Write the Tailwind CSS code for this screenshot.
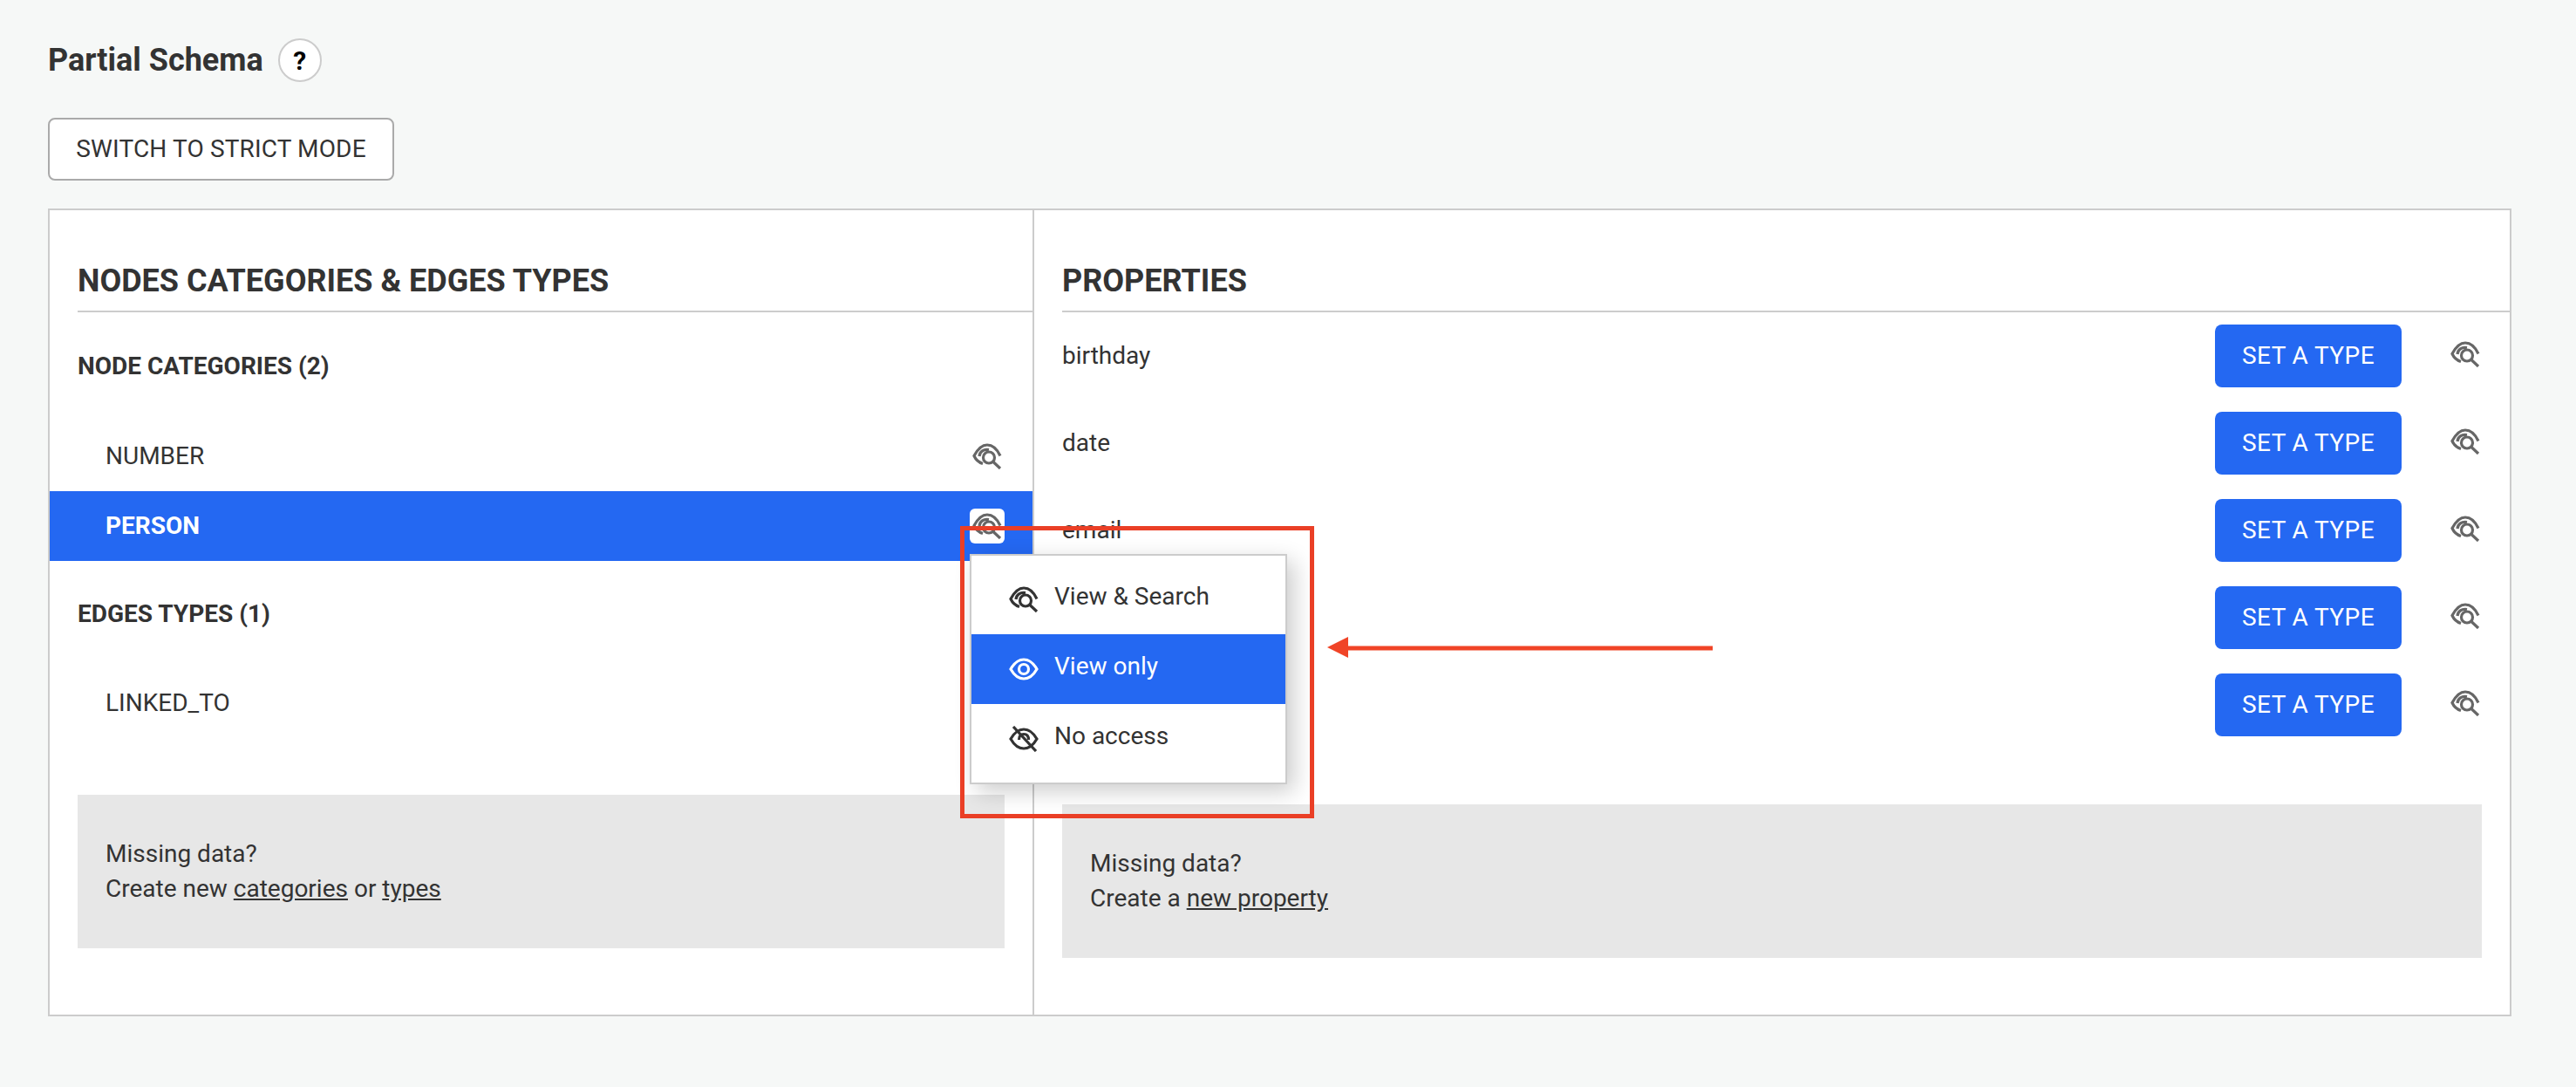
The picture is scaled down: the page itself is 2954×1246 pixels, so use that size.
<!DOCTYPE html>
<html lang="en">
  <head>
    <meta charset="UTF-8" />
    <title>Partial Schema</title>
    <script src="https://cdn.jsdelivr.net/npm/@tailwindcss/browser@4"></script>
  </head>
  <body class="relative h-[1246px] overflow-hidden bg-[#f6f8f7] font-['Roboto',sans-serif] text-[28px] text-[#333]">
    <svg class="hidden">
      <symbol id="eye-search" viewBox="0 0 34 30">
        <g fill="none" stroke="currentColor" stroke-width="3.200">
          <path d="M12 23.500C7.500 22 4 19 2 14.500C6 7 11 2 17 2C23 2 28.500 7 32 14.500" />
          <path d="M8 15C8.500 9.500 13 6.500 19 7.500" />
          <circle cx="19" cy="16.500" r="6.500" />
          <path d="M23.500 21L32 29" />
        </g>
      </symbol>
      <symbol id="eye" viewBox="0 0 34 30">
        <g fill="none" stroke="currentColor" stroke-width="3.200">
          <path d="M2 15C6 8 11 4 17 4C23 4 28 8 32 15C28 22 23 26 17 26C11 26 6 22 2 15Z" />
          <circle cx="17" cy="15" r="5.500" />
        </g>
      </symbol>
      <symbol id="eye-off" viewBox="0 0 34 30">
        <g fill="none" stroke="currentColor" stroke-width="3.200">
          <path d="M2 15C6 8 11 4 17 4C23 4 28 8 32 15C28 22 23 26 17 26C11 26 6 22 2 15Z" />
          <path d="M11.500 16C11.500 11 14 9.500 17 9.500C20 9.500 22.500 11 22.500 16" />
          <path d="M5 1L31 29" />
        </g>
      </symbol>
    </svg>

    <div class="px-[55px] pt-[44px]">
      <!-- Title -->
      <div class="flex h-[50px] items-center gap-[17px]">
        <h1 class="text-[36px] font-bold">Partial Schema</h1>
        <span class="flex h-[50px] w-[50px] items-center justify-center rounded-full border-2 border-[#ccc] bg-white text-[30px] font-bold text-black">?</span>
      </div>

      <button class="mt-[41px] flex h-[72px] w-[397px] items-center justify-center rounded-[8px] border-2 border-[#aaa] bg-white text-[28px] tracking-[0.15px]">SWITCH TO STRICT MODE</button>

      <!-- Panel -->
      <div class="mt-[32px] flex h-[926px] w-[2825px] border-2 border-[#ccc] bg-white">
        <!-- Left column -->
        <div class="w-[1129px] shrink-0 border-r-2 border-[#ccc]">
          <h2 class="ml-[32px] flex h-[117px] items-end border-b-2 border-[#ccc] pb-[9px] text-[36px] font-bold leading-[50px]">NODES CATEGORIES &amp; EDGES TYPES</h2>
          <h3 class="ml-[32px] mt-[42px] text-[28px] font-bold leading-[40px]">NODE CATEGORIES (2)</h3>

          <div class="mt-[43px] flex h-[80px] items-center justify-between pl-[64px] pr-[32px]">
            <span>NUMBER</span>
            <span class="flex h-[40px] w-[40px] items-center justify-center text-[#666]"><svg class="h-[30px] w-[34px]"><use href="#eye-search" /></svg></span>
          </div>
          <div class="flex h-[80px] items-center justify-between bg-[#2468f2] pl-[64px] pr-[32px] font-bold text-white">
            <span>PERSON</span>
            <span class="flex h-[40px] w-[40px] items-center justify-center rounded-[6px] bg-white text-[#666]"><svg class="h-[30px] w-[34px]"><use href="#eye-search" /></svg></span>
          </div>

          <h3 class="ml-[32px] mt-[41px] text-[28px] font-bold leading-[40px]">EDGES TYPES (1)</h3>
          <div class="mt-[42px] flex h-[80px] items-center pl-[64px] pr-[32px]">
            <span>LINKED_TO</span>
          </div>

          <div class="ml-[32px] mt-[65px] flex h-[176px] w-[1063px] flex-col justify-center bg-[#e7e7e7] px-[32px] leading-[40px]">
            <p>Missing data?</p>
            <p>Create new <a class="underline" href="#">categories</a> or <a class="underline" href="#">types</a></p>
          </div>
        </div>

        <!-- Right column -->
        <div class="flex-1 pl-[32px]">
          <h2 class="flex h-[117px] items-end border-b-2 border-[#ccc] pb-[9px] text-[36px] font-bold leading-[50px]">PROPERTIES</h2>
          <div class="mr-[34px] mt-[14px] flex flex-col gap-[28px]">
            <div class="flex h-[72px] items-center justify-between">
              <span>birthday</span>
              <div class="flex items-center gap-[56px]">
                <button class="h-[72px] w-[214px] rounded-[8px] bg-[#2468f2] tracking-[0.4px] text-white">SET A TYPE</button>
                <svg class="mb-[5px] h-[30px] w-[34px] text-[#666]"><use href="#eye-search" /></svg>
              </div>
            </div>
            <div class="flex h-[72px] items-center justify-between">
              <span>date</span>
              <div class="flex items-center gap-[56px]">
                <button class="h-[72px] w-[214px] rounded-[8px] bg-[#2468f2] tracking-[0.4px] text-white">SET A TYPE</button>
                <svg class="mb-[5px] h-[30px] w-[34px] text-[#666]"><use href="#eye-search" /></svg>
              </div>
            </div>
            <div class="flex h-[72px] items-center justify-between">
              <span>email</span>
              <div class="flex items-center gap-[56px]">
                <button class="h-[72px] w-[214px] rounded-[8px] bg-[#2468f2] tracking-[0.4px] text-white">SET A TYPE</button>
                <svg class="mb-[5px] h-[30px] w-[34px] text-[#666]"><use href="#eye-search" /></svg>
              </div>
            </div>
            <div class="flex h-[72px] items-center justify-between">
              <span>name</span>
              <div class="flex items-center gap-[56px]">
                <button class="h-[72px] w-[214px] rounded-[8px] bg-[#2468f2] tracking-[0.4px] text-white">SET A TYPE</button>
                <svg class="mb-[5px] h-[30px] w-[34px] text-[#666]"><use href="#eye-search" /></svg>
              </div>
            </div>
            <div class="flex h-[72px] items-center justify-between">
              <span>phone</span>
              <div class="flex items-center gap-[56px]">
                <button class="h-[72px] w-[214px] rounded-[8px] bg-[#2468f2] tracking-[0.4px] text-white">SET A TYPE</button>
                <svg class="mb-[5px] h-[30px] w-[34px] text-[#666]"><use href="#eye-search" /></svg>
              </div>
            </div>
          </div>

          <div class="mr-[32px] mt-[78px] flex h-[176px] flex-col justify-center bg-[#e7e7e7] px-[32px] leading-[40px]">
            <p>Missing data?</p>
            <p>Create a <a class="underline" href="#">new property</a></p>
          </div>
        </div>
      </div>
    </div>

    <!-- Dropdown menu -->
    <div class="absolute left-[1112px] top-[635px] w-[364px] border-2 border-[#ccc] bg-white py-[10px] shadow-[8px_8px_24px_rgba(0,0,0,0.2)]">
      <div class="flex h-[80px] items-center gap-[18px] pl-[43px]">
        <svg class="h-[30px] w-[34px]"><use href="#eye-search" /></svg>
        <span class="pb-[6px]">View &amp; Search</span>
      </div>
      <div class="flex h-[80px] items-center gap-[18px] bg-[#2468f2] pl-[43px] text-white">
        <svg class="h-[30px] w-[34px]"><use href="#eye" /></svg>
        <span class="pb-[6px]">View only</span>
      </div>
      <div class="flex h-[80px] items-center gap-[18px] pl-[43px]">
        <svg class="h-[30px] w-[34px]"><use href="#eye-off" /></svg>
        <span class="pb-[6px]">No access</span>
      </div>
    </div>

    <!-- Annotation -->
    <div class="absolute left-[1101px] top-[603px] h-[335px] w-[406px] border-[5px] border-[#ea3f26]"></div>
    <svg class="absolute left-[1520px] top-[728px] h-[28px] w-[450px]" viewBox="0 0 450 28">
      <path d="M2 14L26 2V26Z" fill="#f04427" />
      <path d="M26 15H444" stroke="#f04427" stroke-width="5" />
    </svg>
  </body>
</html>
